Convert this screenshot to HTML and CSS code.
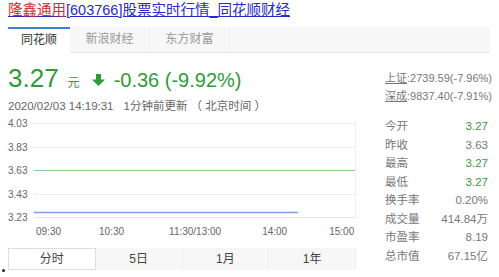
FILE: index.html
```html
<!DOCTYPE html>
<html lang="zh-CN">
<head>
  <meta charset="UTF-8">
  <title>隆鑫通用[603766]股票实时行情</title>
  <link rel="stylesheet" href="styles.css">
</head>
<body>
  <div class="page">
    <a class="title" href="#"><span class="name">隆鑫通用</span>[603766]股票实时行情_同花顺财经</a>

    <div class="tabs">
      <span class="tab active">同花顺</span>
      <span class="tab">新浪财经</span>
      <span class="tab">东方财富</span>
    </div>

    <div class="body">
      <div class="main">
        <div class="quote">
          <span class="price">3.27</span>
          <span class="unit">元</span>
          <svg class="arrow" width="13" height="12" viewBox="0 0 13 12">
            <path d="M4 0 H9 V5.4 H13 L6.5 12 L0 5.4 H4 Z" fill="#2f9b3a"/>
          </svg>
          <span class="change">-0.36 (-9.92%)</span>
        </div>
        <div class="time">2020/02/03 14:19:31<span class="gap"></span>1分钟前更新 （ 北京时间 ）</div>

        <div class="chart">
          <div class="axis">
            <span>4.03</span>
            <span>3.83</span>
            <span>3.63</span>
            <span>3.43</span>
            <span>3.23</span>
          </div>
          <svg class="plot" width="322" height="100" viewBox="0 0 322 100">
            <line x1="0" y1="2.5" x2="321" y2="2.5" stroke="#eeeeee"/>
            <line x1="0" y1="26.5" x2="321" y2="26.5" stroke="#eeeeee"/>
            <line x1="0" y1="73.5" x2="321" y2="73.5" stroke="#eeeeee"/>
            <line x1="0" y1="49.5" x2="321" y2="49.5" stroke="#8cc98c"/>
            <line x1="0" y1="96.5" x2="321" y2="96.5" stroke="#e6e6e6"/>
            <line x1="321.5" y1="0" x2="321.5" y2="97" stroke="#eeeeee"/>
            <line x1="0" y1="91.5" x2="264" y2="91.5" stroke="#7a9fdc" stroke-width="1.5"/>
          </svg>
        </div>
        <div class="times">
          <span>09:30</span>
          <span>10:30</span>
          <span>11:30/13:00</span>
          <span>14:00</span>
          <span>15:00</span>
        </div>

        <div class="ranges">
          <span class="range active">分时</span>
          <span class="range">5日</span>
          <span class="range">1月</span>
          <span class="range">1年</span>
        </div>
      </div>

      <div class="side">
        <div class="index"><u>上证</u>:2739.59(-7.96%)</div>
        <div class="index"><u>深成</u>:9837.40(-7.91%)</div>
        <ul class="stats">
          <li><span>今开</span><b class="up">3.27</b></li>
          <li><span>昨收</span><b>3.63</b></li>
          <li><span>最高</span><b class="up">3.27</b></li>
          <li><span>最低</span><b class="up">3.27</b></li>
          <li><span>换手率</span><b>0.20%</b></li>
          <li><span>成交量</span><b>414.84万</b></li>
          <li><span>市盈率</span><b>8.19</b></li>
          <li><span>总市值</span><b>67.15亿</b></li>
        </ul>
      </div>
    </div>
  </div>
  <i class="dot"></i>
</body>
</html>
```

FILE: styles.css
```css
body {
  margin: 0;
  background: #fff;
  font-family: "Liberation Sans", "Noto Sans CJK SC", sans-serif;
  color: #333;
  overflow: hidden;
}

.page {
  padding: 0 9px 0 8px;
}

.title {
  display: block;
  font-size: 14.5px;
  line-height: 20px;
  color: #2a2ac8;
  text-decoration: underline;
  white-space: nowrap;
}

.title .name {
  color: #d42a2a;
}

.tabs {
  display: flex;
  margin-top: 7px;
  height: 25px;
  background: #f7f7f7;
  border-bottom: 1px solid #e8e8e8;
}

.tab {
  width: 79px;
  font-size: 12px;
  line-height: 25px;
  text-align: center;
  color: #999;
  border-right: 1px solid #eee;
}

.tab.active {
  width: 62px;
  background: #fff;
  color: #333;
  border-top: 2px solid #3d7fd0;
  line-height: 23px;
  border-right: none;
  margin-bottom: -1px;
}

.body {
  display: flex;
}

.main {
  width: 348px;
}

.quote {
  display: flex;
  align-items: baseline;
  margin-top: 11px;
  color: #2f9b3a;
  height: 28px;
}

.price {
  font-size: 26px;
  line-height: 28px;
}

.unit {
  font-size: 12px;
  margin-left: 9px;
  font-family: "Noto Sans CJK SC", sans-serif;
}

.arrow {
  margin-left: 12px;
  align-self: center;
  margin-top: 3px;
}

.change {
  font-size: 20px;
  margin-left: 9px;
}

.time {
  margin-top: 7px;
  font-size: 11.5px;
  line-height: 14px;
  color: #666;
  white-space: nowrap;
}

.gap {
  display: inline-block;
  width: 10px;
}

.chart {
  display: flex;
  margin-top: 8px;
}

.axis {
  width: 26px;
  display: flex;
  flex-direction: column;
  justify-content: space-between;
  font-size: 10px;
  line-height: 14px;
  color: #666;
  height: 108px;
  margin-top: -4px;
  margin-bottom: -4px;
}

.plot {
  display: block;
}

.times {
  display: flex;
  margin-top: 4px;
  padding-left: 28px;
  font-size: 10px;
  line-height: 14px;
  color: #666;
}

.times span:nth-child(2) { margin-left: 38px; }
.times span:nth-child(3) { margin-left: 45px; }
.times span:nth-child(4) { margin-left: 41px; }
.times span:nth-child(5) { margin-left: 42px; }

.ranges {
  display: flex;
  margin-top: 9px;
  height: 22px;
  background: #f7f7f7;
}

.range {
  flex: 1;
  text-align: center;
  font-size: 12px;
  line-height: 22px;
  color: #444;
  border-right: 1px solid #eee;
}

.range.active {
  background: #fff;
  border: 1px solid #ddd;
  line-height: 20px;
}

.side {
  margin-left: 29px;
  padding-top: 16px;
  width: 105px;
  font-size: 11px;
  color: #777;
}

.index {
  line-height: 18px;
  white-space: nowrap;
}

.stats {
  list-style: none;
  margin: 12px 0 0;
  padding: 0;
}

.stats li {
  display: flex;
  justify-content: space-between;
  line-height: 18.5px;
  font-size: 11.5px;
  padding-right: 2px;
}

.stats span {
  color: #777;
}

.stats b {
  font-weight: normal;
  color: #777;
  font-size: 11.5px;
}

.stats b.up {
  color: #3a9b3a;
}

.dot {
  position: absolute;
  left: 2px;
  top: 269px;
  width: 3px;
  height: 3px;
  background: #222;
  border-radius: 50%;
}
```
